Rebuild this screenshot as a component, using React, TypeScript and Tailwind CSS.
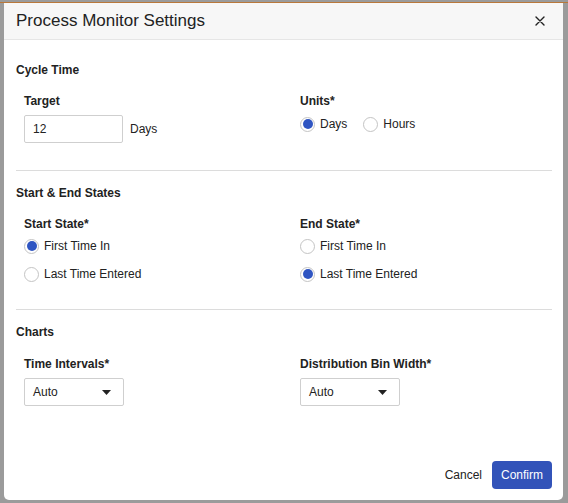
import { useState } from 'react';

function Radio({ checked, label, onClick }: { checked: boolean; label: string; onClick: () => void }) {
  return (
    <label onClick={onClick} className="flex h-5 items-center gap-[5px] cursor-pointer">
      <span className="flex h-[15px] w-[15px] items-center justify-center rounded-full border border-[#c4c4c4] bg-white">
        {checked && <span className="h-[10px] w-[10px] rounded-full bg-[#2f55c2]" />}
      </span>
      <span className="text-xs text-[#222]">{label}</span>
    </label>
  );
}

function Select({ value }: { value: string }) {
  return (
    <div className="flex h-[28px] w-[100px] items-center justify-between rounded-[2px] border border-[#cfcfcf] bg-white pl-2 pr-[12px]">
      <span className="text-xs text-[#222]">{value}</span>
      <svg width="9" height="5" viewBox="0 0 9 5">
        <path d="M0 0 L9 0 L4.5 5 Z" fill="#222" />
      </svg>
    </div>
  );
}

export default function App() {
  const [units, setUnits] = useState('days');
  const [startState, setStartState] = useState('first');
  const [endState, setEndState] = useState('last');
  const [target, setTarget] = useState('12');

  return (
    <div className="h-[503px] w-[568px] overflow-hidden bg-[#9b9b9b] font-['Liberation_Sans',Arial,sans-serif]">
      <div className="h-[2px]" />
      <div className="h-px bg-[#b9783a]" />
      <div className="ml-[4px] flex h-[497px] w-[559px] flex-col rounded-b-[5px] bg-white">
        {/* Header */}
        <div className="flex h-[37px] items-center justify-between border-b border-[#e6e6e6] bg-[#f7f7f7] pl-3 pr-[18px]">
          <span className="text-[17px] text-[#222]">Process Monitor Settings</span>
          <button className="flex items-center justify-center">
            <svg width="10" height="10" viewBox="0 0 10 10">
              <path d="M1 1 L9 9 M9 1 L1 9" stroke="#222" strokeWidth="1.4" strokeLinecap="round" />
            </svg>
          </button>
        </div>

        {/* Body */}
        <div className="px-3 pt-[22px] pr-[11px]">
          {/* Cycle time */}
          <div className="text-xs font-bold leading-4 text-[#222]">Cycle Time</div>
          <div className="ml-2 mt-[15px] grid grid-cols-[276px_1fr]">
            <div>
              <div className="text-xs font-bold leading-4 text-[#222]">Target</div>
              <div className="mt-[6px] flex items-center">
                <input
                  value={target}
                  onChange={(e) => setTarget(e.target.value)}
                  className="h-[28px] w-[99px] rounded-[2px] border border-[#cfcfcf] px-2 text-xs text-[#222] outline-none"
                />
                <span className="ml-[7px] text-xs text-[#222]">Days</span>
              </div>
            </div>
            <div>
              <div className="text-xs font-bold leading-4 text-[#222]">Units*</div>
              <div className="mt-[5px] flex gap-4">
                <Radio checked={units === 'days'} label="Days" onClick={() => setUnits('days')} />
                <Radio checked={units === 'hours'} label="Hours" onClick={() => setUnits('hours')} />
              </div>
            </div>
          </div>
          <div className="mt-[27px] h-px bg-[#dcdcdc]" />

          {/* Start & End states */}
          <div className="mt-[14px] text-xs font-bold leading-4 text-[#222]">Start &amp; End States</div>
          <div className="ml-2 mt-[15px] grid grid-cols-[276px_1fr]">
            <div>
              <div className="text-xs font-bold leading-4 text-[#222]">Start State*</div>
              <div className="mt-1 flex flex-col gap-2">
                <Radio checked={startState === 'first'} label="First Time In" onClick={() => setStartState('first')} />
                <Radio checked={startState === 'last'} label="Last Time Entered" onClick={() => setStartState('last')} />
              </div>
            </div>
            <div>
              <div className="text-xs font-bold leading-4 text-[#222]">End State*</div>
              <div className="mt-1 flex flex-col gap-2">
                <Radio checked={endState === 'first'} label="First Time In" onClick={() => setEndState('first')} />
                <Radio checked={endState === 'last'} label="Last Time Entered" onClick={() => setEndState('last')} />
              </div>
            </div>
          </div>
          <div className="mt-[25px] h-px bg-[#dcdcdc]" />

          {/* Charts */}
          <div className="mt-[14px] text-xs font-bold leading-4 text-[#222]">Charts</div>
          <div className="ml-2 mt-[16px] grid grid-cols-[276px_1fr]">
            <div>
              <div className="text-xs font-bold leading-4 text-[#222]">Time Intervals*</div>
              <div className="mt-[6px]">
                <Select value="Auto" />
              </div>
            </div>
            <div>
              <div className="text-xs font-bold leading-4 text-[#222]">Distribution Bin Width*</div>
              <div className="mt-[6px]">
                <Select value="Auto" />
              </div>
            </div>
          </div>
        </div>

        {/* Footer */}
        <div className="mt-auto flex items-center justify-end gap-[10px] pb-[11px] pr-[11px]">
          <button className="text-xs text-[#222]">Cancel</button>
          <button className="h-[28px] rounded-[4px] bg-[#3253b9] px-[9px] text-xs text-white">Confirm</button>
        </div>
      </div>
    </div>
  );
}
